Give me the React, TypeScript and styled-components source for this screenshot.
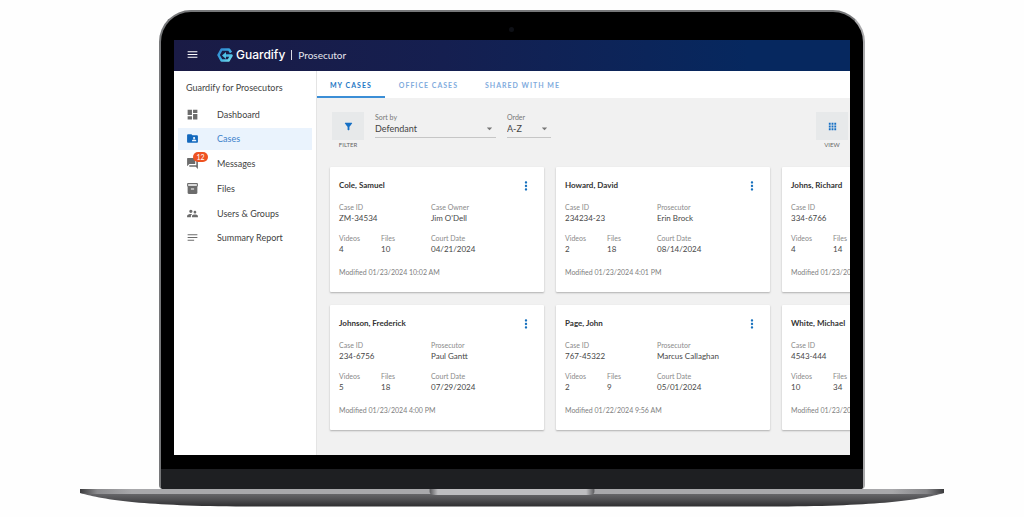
import React from "react";
import styled, { createGlobalStyle } from "styled-components";
import {
  MdApps,
  MdArrowDropDown,
  MdDashboard,
  MdFilterAlt,
  MdFolderShared,
  MdForum,
  MdInventory2,
  MdMenu,
  MdMoreVert,
  MdNotes,
  MdSupervisorAccount,
} from "react-icons/md";

const GlobalStyle = createGlobalStyle`
  *, *::before, *::after { box-sizing: border-box; }
  body {
    margin: 0;
    background: #fefefe;
    font-family: Lato, "Liberation Sans", sans-serif;
    color: #444;
  }
  button, select { font: inherit; color: inherit; }
`;

/* Laptop */

const Page = styled.div`
  padding: 10px 80px;
`;

const Lid = styled.div`
  margin: 0 79px;
  padding: 28px 13px 0;
  background: #000;
  border: 2px solid #77787a;
  border-right-color: #a9a9ab;
  border-bottom: 0;
  border-radius: 32px 32px 4px 4px;
  overflow: hidden;
  position: relative;
`;

const Camera = styled.span`
  position: absolute;
  top: 15px;
  left: 50%;
  width: 5px;
  height: 5px;
  margin-left: -3px;
  border-radius: 50%;
  background: #0e1016;
`;

const Chin = styled.div`
  height: 20px;
  margin: 14px -13px 0;
  background: #1e1f22;
`;

const Base = styled.svg`
  display: block;
  width: 100%;
  height: 18px;
`;

const Screen = styled.div`
  overflow: hidden;
  background: #fff;
`;

/* Application header */

const Header = styled.header`
  display: flex;
  align-items: center;
  height: 31px;
  padding: 0 12px 2px;
  background: linear-gradient(90deg, #1a1b45 0%, #151f50 40%, #06285f 85%);
  color: #fff;
`;

const IconButton = styled.button`
  display: flex;
  padding: 0;
  border: 0;
  background: none;
  font-size: 13px;
`;

const Brand = styled.a`
  display: flex;
  align-items: center;
  gap: 3px;
  margin-left: 18px;
  color: #fff;
  text-decoration: none;
  font: 500 12px/16px Inter, sans-serif;
`;

const Product = styled.span`
  margin-left: 6px;
  padding-left: 6px;
  border-left: 1px solid #d8dae4;
  font-size: 10px;
  line-height: 10px;
  color: #e6e7ee;
`;

/* Body */

const Body = styled.div`
  display: flex;
`;

const Sidebar = styled.aside`
  flex: 0 0 143px;
  padding: 10px 4px 0;
  border-right: 1px solid #e4e4e4;
`;

const SidebarTitle = styled.h1`
  margin: 0 0 0 8px;
  font-size: 9px;
  line-height: 14px;
  font-weight: 400;
  white-space: nowrap;
`;

const Nav = styled.nav`
  display: flex;
  flex-direction: column;
  justify-content: space-between;
  height: 146px;
  margin-top: 8px;
`;

const NavLink = styled.a<{ $active?: boolean }>`
  display: flex;
  align-items: center;
  gap: 18px;
  height: 22px;
  padding-left: 8px;
  font-size: 9px;
  text-decoration: none;
  color: ${(p) => (p.$active ? "#3d82cb" : "#3f3f3f")};
  background: ${(p) => (p.$active ? "#eaf3fd" : "transparent")};
`;

const NavIcon = styled.span<{ $active?: boolean }>`
  position: relative;
  display: flex;
  font-size: 13px;
  color: ${(p) => (p.$active ? "#1268bd" : "#6c6c6c")};
`;

const Badge = styled.span`
  position: absolute;
  left: 7px;
  top: -5px;
  width: 15px;
  border-radius: 5px;
  background: #ee5322;
  color: #fff;
  font-size: 7px;
  line-height: 10px;
  text-align: center;
`;

const Main = styled.main`
  flex: 1;
  min-width: 0;
  background: #f1f1f1;
`;

const Tabs = styled.nav`
  display: flex;
  gap: 1px;
  height: 27px;
  background: #fff;
`;

const Tab = styled.a<{ $active?: boolean }>`
  padding: 0 13px;
  border-bottom: 2px solid ${(p) => (p.$active ? "#3b8ed6" : "transparent")};
  color: ${(p) => (p.$active ? "#2577c4" : "#7fabdd")};
  font-size: 7px;
  font-weight: 700;
  line-height: 28px;
  letter-spacing: 1px;
  text-decoration: none;
  white-space: nowrap;
`;

const Toolbar = styled.div`
  display: flex;
  align-items: flex-start;
  gap: 11px;
  padding: 14px 2px 0 15px;
`;

const ToolButton = styled.button`
  display: flex;
  flex-direction: column;
  align-items: center;
  gap: 1px;
  padding: 0;
  border: 0;
  background: none;
  font-size: 6px;
  line-height: 8px;
  color: #666;
`;

const ToolIcon = styled.span`
  display: grid;
  place-items: center;
  width: 32px;
  height: 28px;
  background: #e7e9ea;
  font-size: 11px;
  color: #1670c5;
`;

const Field = styled.label<{ $width: number }>`
  position: relative;
  display: block;
  width: ${(p) => p.$width}px;
  border-bottom: 1px solid #c6c6c6;
  font-size: 7px;
  line-height: 10px;
  color: #777;
`;

const Select = styled.select`
  display: block;
  width: 100%;
  height: 15px;
  padding: 0 0 1px;
  border: 0;
  appearance: none;
  background: none;
  font-size: 9px;
  line-height: 12px;
  color: #444;
`;

const Arrow = styled(MdArrowDropDown)`
  position: absolute;
  right: 0;
  bottom: 2px;
  font-size: 13px;
  pointer-events: none;
`;

const Spacer = styled.div`
  flex: 1;
`;

const Cards = styled.section`
  display: grid;
  grid-template-columns: repeat(3, 214px);
  gap: 13px 12px;
  padding: 18px 0 25px 13px;
`;

const Card = styled.article`
  padding: 12px 9px 15px;
  background: #fff;
  border-radius: 1px;
  box-shadow: 0 1px 2px rgba(0, 0, 0, 0.28);
`;

const CardHead = styled.div`
  display: flex;
  justify-content: space-between;
  height: 14px;
  margin-bottom: 9px;
`;

const CardTitle = styled.h2`
  margin: 0;
  font-size: 8px;
  line-height: 12px;
  font-weight: 700;
  color: #333;
`;

const MenuButton = styled(IconButton)`
  margin: 0 2px 0 0;
  font-size: 14px;
  color: #1670bd;
`;

const Details = styled.dl`
  display: grid;
  grid-template-columns: 42px 50px 1fr;
  gap: 9px 0;
  margin: 0;
`;

const Detail = styled.div<{ $wide?: boolean }>`
  grid-column: ${(p) => (p.$wide ? "span 2" : "auto")};
  white-space: nowrap;

  dt {
    font-size: 7px;
    line-height: 11px;
    color: #8a8a8a;
  }

  dd {
    margin: 0;
    font-size: 8px;
    line-height: 11px;
    color: #484848;
  }
`;

const Modified = styled.p`
  margin: 12px 0 0;
  font-size: 7px;
  line-height: 10px;
  color: #808080;
  white-space: nowrap;
`;

const navItems = [
  { label: "Dashboard", Icon: MdDashboard },
  { label: "Cases", Icon: MdFolderShared, active: true },
  { label: "Messages", Icon: MdForum, badge: 12 },
  { label: "Files", Icon: MdInventory2 },
  { label: "Users & Groups", Icon: MdSupervisorAccount },
  { label: "Summary Report", Icon: MdNotes },
];

interface CaseRecord {
  name: string;
  id: string;
  role: string;
  person: string;
  videos: number;
  files: number;
  court: string;
  modified: string;
}

const cases: CaseRecord[] = [
  { name: "Cole, Samuel", id: "ZM-34534", role: "Case Owner", person: "Jim O'Dell", videos: 4, files: 10, court: "04/21/2024", modified: "01/23/2024 10:02 AM" },
  { name: "Howard, David", id: "234234-23", role: "Prosecutor", person: "Erin Brock", videos: 2, files: 18, court: "08/14/2024", modified: "01/23/2024 4:01 PM" },
  { name: "Johns, Richard", id: "334-6766", role: "", person: "", videos: 4, files: 14, court: "", modified: "01/23/2024" },
  { name: "Johnson, Frederick", id: "234-6756", role: "Prosecutor", person: "Paul Gantt", videos: 5, files: 18, court: "07/29/2024", modified: "01/23/2024 4:00 PM" },
  { name: "Page, John", id: "767-45322", role: "Prosecutor", person: "Marcus Callaghan", videos: 2, files: 9, court: "05/01/2024", modified: "01/22/2024 9:56 AM" },
  { name: "White, Michael", id: "4543-444", role: "", person: "", videos: 10, files: 34, court: "", modified: "01/23/2024" },
];

const BrandMark = () => (
  <svg width="16" height="14" viewBox="0 0 32 28" fill="none" aria-hidden="true">
    <defs>
      <linearGradient id="mark" x1="0" y1="0" x2="1" y2="1">
        <stop offset="0" stopColor="#2f86cf" />
        <stop offset="0.5" stopColor="#3aa9e0" />
        <stop offset="1" stopColor="#74dcea" />
      </linearGradient>
    </defs>
    <path
      d="M28 9 L24 3 H9 L3 14 L9 25 H23 L29 15 H14"
      stroke="url(#mark)"
      strokeWidth="5"
      strokeLinejoin="round"
    />
    <path d="M18 8 V22 L10 15 Z" fill="#4fc0e6" />
  </svg>
);

const LaptopBase = () => (
  <Base viewBox="0 0 865 18" preserveAspectRatio="none" aria-hidden="true">
    <defs>
      <linearGradient id="under" x1="0" y1="0" x2="0" y2="1">
        <stop offset="0.25" stopColor="#69696c" />
        <stop offset="0.6" stopColor="#4f4f52" />
        <stop offset="1" stopColor="#2e2e30" />
      </linearGradient>
      <linearGradient id="edge" x1="0" y1="0" x2="1" y2="0">
        <stop offset="0" stopColor="#3a3a3c" />
        <stop offset="0.02" stopColor="#8b8b8e" />
        <stop offset="0.06" stopColor="#a8a8ab" />
        <stop offset="0.94" stopColor="#a8a8ab" />
        <stop offset="0.98" stopColor="#858588" />
        <stop offset="1" stopColor="#3a3a3c" />
      </linearGradient>
      <linearGradient id="notch" x1="0" y1="0" x2="1" y2="0">
        <stop offset="0" stopColor="#5a5a5d" />
        <stop offset="0.05" stopColor="#bdbdc0" />
        <stop offset="0.95" stopColor="#bdbdc0" />
        <stop offset="1" stopColor="#5a5a5d" />
      </linearGradient>
    </defs>
    <path d="M0 0 H865 V4 C840 11 800 17 700 17.5 H165 C65 17 25 11 0 4 Z" fill="url(#under)" />
    <path d="M0 0 H865 V4 L855 5 H10 L0 4 Z" fill="url(#edge)" />
    <path d="M350 0 H515 V3 Q515 6 509 6 H356 Q350 6 350 3 Z" fill="url(#notch)" />
  </Base>
);

const CaseCard = ({ record }: { record: CaseRecord }) => (
  <Card>
    <CardHead>
      <CardTitle>{record.name}</CardTitle>
      <MenuButton aria-label={`Options for ${record.name}`}>
        <MdMoreVert />
      </MenuButton>
    </CardHead>
    <Details>
      <Detail $wide>
        <dt>Case ID</dt>
        <dd>{record.id}</dd>
      </Detail>
      <Detail>
        <dt>{record.role}</dt>
        <dd>{record.person}</dd>
      </Detail>
      <Detail>
        <dt>Videos</dt>
        <dd>{record.videos}</dd>
      </Detail>
      <Detail>
        <dt>Files</dt>
        <dd>{record.files}</dd>
      </Detail>
      {record.court && (
        <Detail>
          <dt>Court Date</dt>
          <dd>{record.court}</dd>
        </Detail>
      )}
    </Details>
    <Modified>Modified {record.modified}</Modified>
  </Card>
);

export default function App() {
  return (
    <Page>
      <GlobalStyle />
      <Lid>
        <Camera />
        <Screen>
          <Header>
            <IconButton aria-label="Menu">
              <MdMenu />
            </IconButton>
            <Brand href="#">
              <BrandMark />
              Guardify
            </Brand>
            <Product>Prosecutor</Product>
          </Header>
          <Body>
            <Sidebar>
              <SidebarTitle>Guardify for Prosecutors</SidebarTitle>
              <Nav>
                {navItems.map(({ label, Icon, active, badge }) => (
                  <NavLink key={label} href="#" $active={active}>
                    <NavIcon $active={active}>
                      <Icon />
                      {badge && <Badge>{badge}</Badge>}
                    </NavIcon>
                    {label}
                  </NavLink>
                ))}
              </Nav>
            </Sidebar>
            <Main>
              <Tabs>
                <Tab href="#" $active>MY CASES</Tab>
                <Tab href="#">OFFICE CASES</Tab>
                <Tab href="#">SHARED WITH ME</Tab>
              </Tabs>
              <Toolbar>
                <ToolButton>
                  <ToolIcon><MdFilterAlt /></ToolIcon>
                  FILTER
                </ToolButton>
                <Field $width={121}>
                  Sort by
                  <Select defaultValue="Defendant">
                    <option>Defendant</option>
                  </Select>
                  <Arrow />
                </Field>
                <Field $width={44}>
                  Order
                  <Select defaultValue="A-Z">
                    <option>A-Z</option>
                  </Select>
                  <Arrow />
                </Field>
                <Spacer />
                <ToolButton>
                  <ToolIcon><MdApps /></ToolIcon>
                  VIEW
                </ToolButton>
              </Toolbar>
              <Cards>
                {cases.map((record) => (
                  <CaseCard key={record.id} record={record} />
                ))}
              </Cards>
            </Main>
          </Body>
        </Screen>
        <Chin />
      </Lid>
      <LaptopBase />
    </Page>
  );
}
